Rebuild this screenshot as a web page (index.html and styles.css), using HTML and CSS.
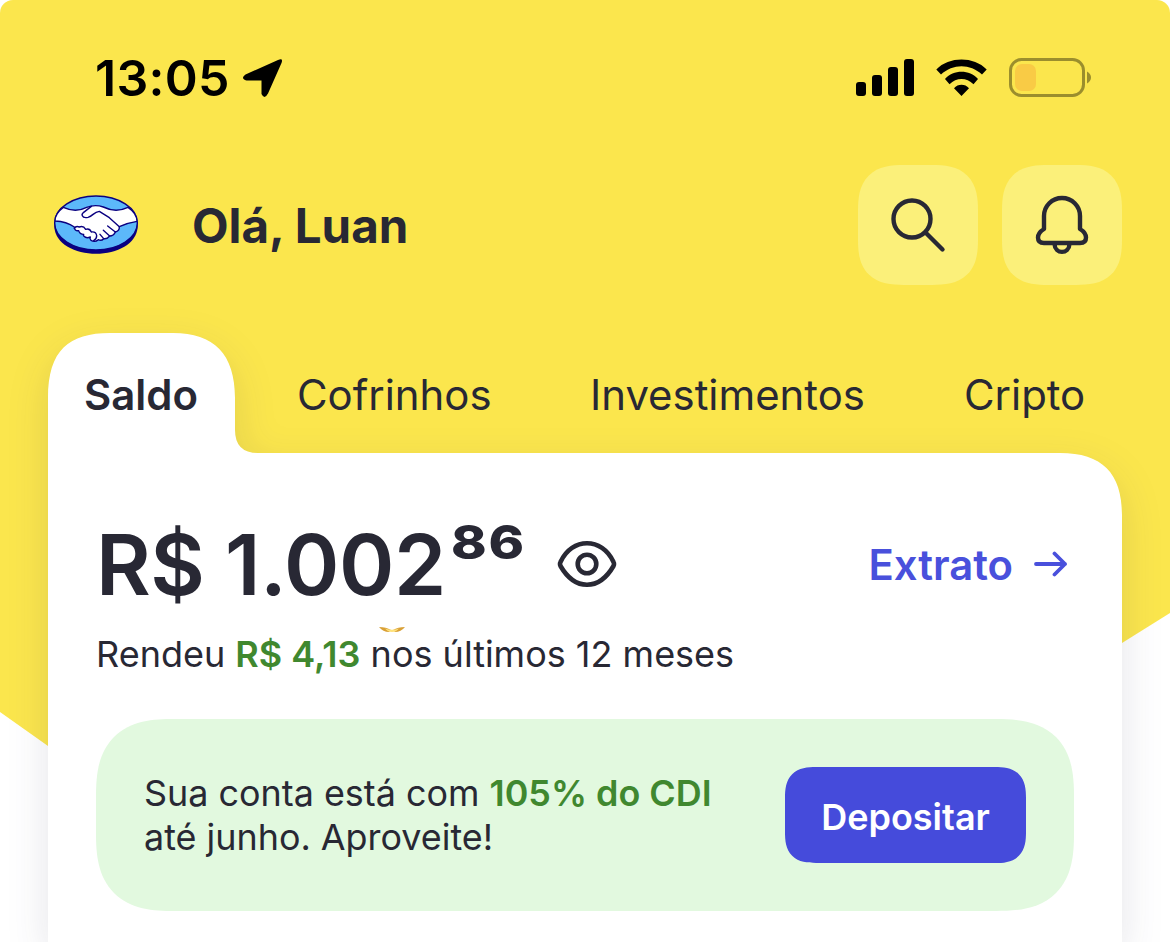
FILE: index.html
```html
<!DOCTYPE html>
<html lang="pt-BR">
<head>
<meta charset="utf-8">
<title>Mercado Pago</title>
<link rel="stylesheet" href="styles.css">
</head>
<body>
<div class="screen">
  <div class="backdrop"></div>
  <svg class="silhouette" viewBox="0 0 1170 942" aria-hidden="true">
    <path fill="#fff" d="M48 1060V398C48 350 69 333 110 333H173C214 333 235 354 235 398V430Q235 453 258 453H1060C1102 453 1122 473 1122 515V1060Z"/>
  </svg>

  <div class="status">
    <span class="clock">13:05</span>
    <svg class="nav" viewBox="0 0 42 42"><path d="M36 3Q41.500 0.500 39.500 6L26 36.500Q22.500 43 19.500 37V23.500H4.500Q-2 21.500 3.500 17.500Z"/></svg>
    <svg class="signals" viewBox="0 0 240 44">
      <rect x="1" y="27" width="10" height="14" rx="3"/><rect x="17" y="20" width="10" height="21" rx="3"/><rect x="33" y="12" width="10" height="29" rx="3"/><rect x="49" y="4" width="10" height="37" rx="3"/>
      <path d="M81.300 14.500C94 1.200 119 1.200 131.700 14.500L127 19.500C115 8.500 98 8.500 86 19.500ZM90 24C98.500 14.300 114.500 14.300 123 24L118.500 29.300C111.500 22.300 101.500 22.300 94.500 29.300ZM99 33.200C103 28.700 110 28.700 114 33.200L106.500 41Z"/>
      <rect x="155.500" y="4.500" width="73" height="36" rx="11" fill="none" stroke="#9b8e2d" stroke-width="3"/>
      <rect x="160" y="9" width="21" height="27" rx="7" fill="#f9cb45"/>
      <path d="M232 16.500Q236 19 236 22.500T232 28.500Z" fill="#9b8e2d"/>
    </svg>
  </div>

  <header class="header">
    <svg class="logo" viewBox="36 40 264 186">
      <path d="M43 124V138C46 190 105 219 168 219S290 190 293 138V124Z" fill="#0a0080"/>
      <ellipse cx="168" cy="127" rx="124" ry="81" fill="#5cb8fa" stroke="#0a0080" stroke-width="4.200"/>
      <path d="M70 80C96 92 119 91 140 80Q165 70 190 79C216 92 239 92 264 80Q291 98 291 122C270 125 255 130 238 138Q239 151 226 154Q221 166 209 166Q201 176 191 174Q184 182 175 177Q165 186 153 179Q148 173 151 169Q139 174 132 167Q129 164 131 161Q119 161 116 150Q103 152 103 139C86 127 66 122 45 121Q45 98 70 80Z" fill="#fff" stroke="#0a0080" stroke-width="4.200" stroke-linejoin="round"/>
      <path d="M103 143Q108 134 118 139Q130 134 137 146Q149 142 154 154Q168 152 170 165Q170 175 161 180M191 174L180 161M209 166L190 149M226 154L203 136M238 138L208 111L178 92C160 94 160 106 144 110Q130 113 127 105Q124 101 131 95L154 77" fill="none" stroke="#0a0080" stroke-width="4.200" stroke-linecap="round" stroke-linejoin="round"/>
    </svg>
    <h1 class="hello">Olá, Luan</h1>
    <button class="icon-btn" aria-label="Buscar">
      <svg viewBox="0 0 120 120"><circle cx="54" cy="54" r="18.500"/><path d="M67.500 67.500L84.500 84.500"/></svg>
    </button>
    <button class="icon-btn" aria-label="Notificações">
      <svg viewBox="0 0 120 120"><path d="M42 64V51A18 18 0 0 1 78 51V64C82 66.500 84 69.500 84 72.500Q84 78 78 78H42Q36 78 36 72.500C36 69.500 38 66.500 42 64ZM52.500 79C53 89.500 67 89.500 67.500 79"/></svg>
    </button>
  </header>

  <nav class="tabs">
    <a class="tab tab-active">Saldo</a>
    <a class="tab tab-safe">Cofrinhos</a>
    <a class="tab tab-invest">Investimentos</a>
    <a class="tab tab-crypto">Cripto</a>
  </nav>

  <main class="card">
    <div class="balance">
      <span class="amount">R$ 1.002</span><span class="cents">86</span>
      <svg class="eye" viewBox="0 0 60 48"><path d="M3.500 22C15-3 45-3 56.500 22Q57.500 24 56.500 26C42 51 18 51 3.500 26Q2.500 24 3.500 22Z"/><circle cx="30" cy="24" r="9.300"/></svg>
      <a class="extract"><span class="extract-label">Extrato</span><svg class="arrow" viewBox="0 0 34 26"><path d="M2 13H31M20.500 2.500L31 13L20.500 23.500"/></svg></a>
    </div>
    <p class="yield">Rendeu <b>R$ 4,13</b> nos últimos 12 meses
      <svg class="sparkle" viewBox="0 0 26 6"><path d="M0 0Q7 0 12 3L10 5Q4 5 0 0Z" fill="#d9a036"/><path d="M26 0Q19 0 14 3L16 5Q22 5 26 0Z" fill="#d9a036"/><path d="M6 1.500Q13 4 20 1.500Q17 5 13 5T6 1.500Z" fill="#ffe27a"/></svg>
    </p>
    <section class="banner">
      <p class="offer">Sua conta está com <b>105% do CDI</b><br>até junho. Aproveite!</p>
      <button class="deposit">Depositar</button>
    </section>
  </main>
</div>
</body>
</html>
```
FILE: styles.css
```css
* { box-sizing: border-box; margin: 0; padding: 0; }
body { background: #fff; font-family: Inter, "Liberation Sans", sans-serif; color: #282834; }
svg { display: block; flex: none; }
button { border: 0; font: inherit; color: inherit; }
.screen { position: relative; width: 1170px; height: 942px; overflow: hidden; display: flex; flex-direction: column; isolation: isolate; white-space: nowrap; }
.backdrop { position: absolute; inset: 0; z-index: -2; background: #fbe64d; border-radius: 13px 13px 0 0; clip-path: polygon(0 0, 100% 0, 100% 613px, 1122px 643px, 900px 760px, 300px 860px, 48px 746px, 0 712px); }
.silhouette { position: absolute; inset: 0; z-index: -1; width: 1170px; height: 942px; filter: drop-shadow(0 14px 20px rgba(30, 30, 70, .12)); }

.status { height: 155px; padding: 0 75px 0 95px; display: flex; align-items: center; color: #000; }
.clock { width: 147px; font-size: 50px; font-weight: 600; letter-spacing: .3px; }
.nav { width: 42px; height: 42px; }
.signals { width: 240px; height: 44px; margin-left: auto; margin-bottom: 2px; }

.header { height: 138px; margin-top: 1px; padding: 0 48px 0 52px; display: flex; align-items: center; }
.logo { width: 88px; height: 62px; margin-right: 52px; margin-bottom: 1px; }
.hello { flex: 1; font-size: 47.5px; font-weight: 700; line-height: 60px; padding-top: 2px; }
.icon-btn { width: 120px; height: 120px; border-radius: 36px; background: #fbf07a; }
.icon-btn + .icon-btn { margin-left: 24px; }
.icon-btn svg { fill: none; stroke: #282834; stroke-width: 4.4; stroke-linecap: round; stroke-linejoin: round; }

.tabs { height: 120px; margin: 39px 48px 0; display: flex; align-items: center; font-size: 41.9px; line-height: 50px; padding-top: 3px; }
.tab { flex: none; }
.tab-active { width: 249px; padding-left: 36px; font-weight: 600; }
.tab-safe { width: 293px; }
.tab-invest { width: 374px; }

.card { margin: 0 48px; padding: 0 48px; flex: 1; }
.balance { height: 174px; padding-top: 48px; display: flex; align-items: center; }
.amount { width: 355px; font-size: 84px; font-weight: 600; letter-spacing: -.5px; }
.cents { width: 106px; font-size: 46px; font-weight: 800; line-height: 46px; padding-bottom: 45px; letter-spacing: 1.5px; transform: scaleX(1.17); transform-origin: left; }
.eye { width: 60px; height: 48px; fill: none; stroke: #282834; stroke-width: 4.6; }
.extract { margin-left: auto; padding-right: 6px; display: flex; align-items: center; gap: 21px; font-size: 41.8px; font-weight: 600; color: #4950dc; }
.extract-label { padding-top: 2px; }
.arrow { width: 34px; height: 26px; fill: none; stroke: #4950dc; stroke-width: 3.8; stroke-linecap: round; stroke-linejoin: round; }
.yield { position: relative; height: 53px; padding-top: 1px; font-size: 36px; line-height: 52px; }
.yield b { font-weight: 600; color: #40882f; }
.sparkle { position: absolute; left: 283px; top: 0; width: 26px; height: 6px; }
.banner { margin-top: 39px; height: 192px; width: 978px; padding: 0 48px; border-radius: 64px; background: #e2f9df; display: flex; align-items: center; justify-content: space-between; }
.offer { font-size: 35.9px; line-height: 44px; }
.offer b { font-weight: 600; color: #40882f; }
.deposit { width: 241px; height: 96px; padding-top: 4px; border-radius: 24px; background: #454bdb; color: #fff; font-size: 36px; font-weight: 600; }

@supports (corner-shape: superellipse(1.4)) {
  .icon-btn, .banner, .deposit { corner-shape: superellipse(1.4); }
  .icon-btn { border-radius: 46px; }
  .banner { border-radius: 78px; }
  .deposit { border-radius: 31px; }
}
```
